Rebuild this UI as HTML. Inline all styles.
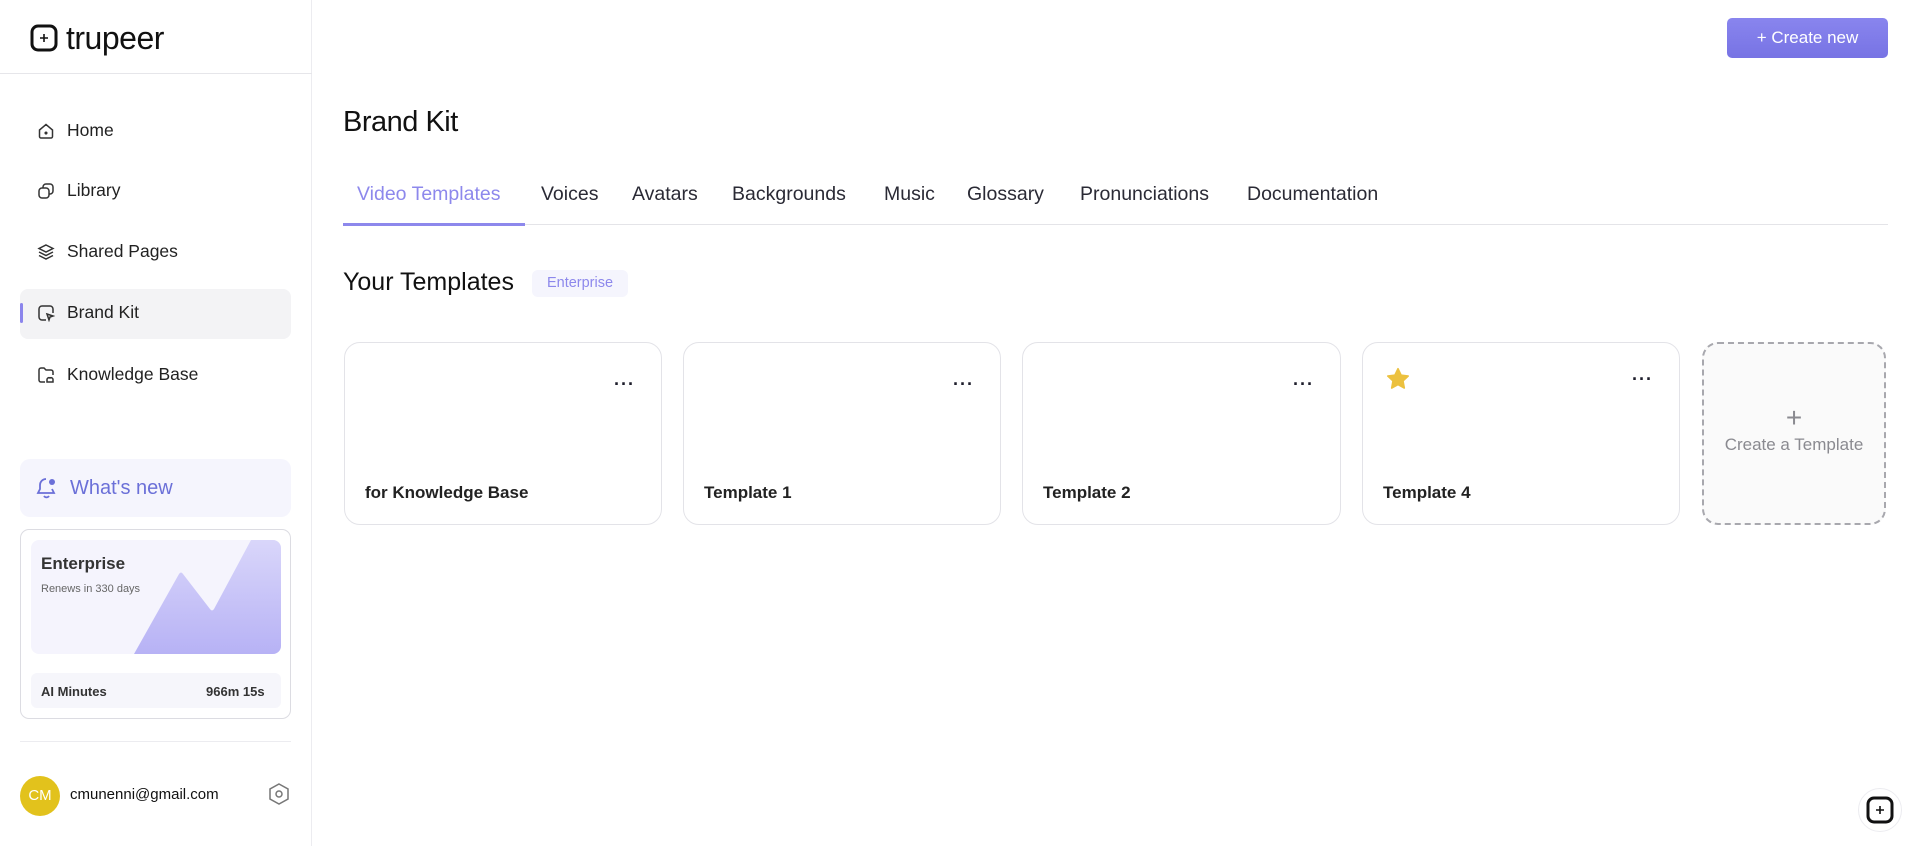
<!DOCTYPE html>
<html><head><meta charset="utf-8"><style>
*{box-sizing:border-box;margin:0;padding:0}
body{width:1920px;height:846px;background:#fff;font-family:"Liberation Sans",sans-serif;color:#1d1d2b;position:relative;overflow:hidden}
.abs{position:absolute}
.side{left:0;top:0;width:312px;height:846px;border-right:1px solid #ececf0}
.nav{left:37px;font-size:17.5px;display:flex;align-items:center;color:#222}
.nav svg{margin-right:12px}
.tab{top:183px;font-size:19.5px;color:#2a2a35}
.card{top:342px;height:183px;border:1px solid #e3e3e8;border-radius:16px;background:#fff}
.card .t{position:absolute;left:20px;top:140px;font-size:17px;font-weight:bold;color:#222}
.card .d{position:absolute;right:26px;top:36px;font-size:18px;font-weight:bold;letter-spacing:1px;line-height:10px}
</style></head><body>
<div class="abs side"></div>
<svg class="abs" style="left:30px;top:24px" width="28" height="28" viewBox="0 0 28 28"><rect x="2" y="2" width="24" height="24" rx="6" fill="none" stroke="#111" stroke-width="3"/><path d="M14 10v8M10 14h8" stroke="#111" stroke-width="1.6"/></svg>
<div class="abs" style="left:66px;top:20px;font-size:32px;color:#111;letter-spacing:-0.5px">trupeer</div>
<div class="abs" style="left:0;top:73px;width:312px;height:1px;background:#e6e6ea"></div>
<div class="abs" style="left:20px;top:289px;width:271px;height:50px;background:#f3f3f5;border-radius:8px"></div>
<div class="abs" style="left:20px;top:303px;width:3px;height:20px;background:#8b85ec;border-radius:2px"></div>
<div class="abs nav" style="top:120px"><svg width="18" height="18" viewBox="0 0 18 18" fill="none" stroke="#333" stroke-width="1.5"><path d="M2.5 8L9 2.5 15.5 8v6.5a1.5 1.5 0 0 1-1.5 1.5H4a1.5 1.5 0 0 1-1.5-1.5z"/><circle cx="9" cy="11" r=".8" fill="#333"/></svg>Home</div>
<div class="abs nav" style="top:180px"><svg width="18" height="18" viewBox="0 0 18 18" fill="none" stroke="#333" stroke-width="1.5"><rect x="2" y="6" width="10" height="10" rx="3"/><path d="M6 6V5a3 3 0 0 1 3-3h4a3 3 0 0 1 3 3v4a3 3 0 0 1-3 3h-1"/></svg>Library</div>
<div class="abs nav" style="top:241px"><svg width="18" height="18" viewBox="0 0 18 18" fill="none" stroke="#333" stroke-width="1.5"><path d="M9 2l7 3.5-7 3.5-7-3.5z M2 9l7 3.5L16 9 M2 12.5L9 16l7-3.5"/></svg>Shared Pages</div>
<div class="abs nav" style="top:302px"><svg width="18" height="18" viewBox="0 0 18 18" fill="none" stroke="#333" stroke-width="1.5"><path d="M9 16H5a3 3 0 0 1-3-3V5a3 3 0 0 1 3-3h8a3 3 0 0 1 3 3v4"/><path d="M10 10l6 2-3 1-1 3z"/></svg>Brand Kit</div>
<div class="abs nav" style="top:364px"><svg width="18" height="18" viewBox="0 0 18 18" fill="none" stroke="#333" stroke-width="1.5"><path d="M8 16H4a2 2 0 0 1-2-2V4a2 2 0 0 1 2-2h3l2 2h5a2 2 0 0 1 2 2v3"/><path d="M10 16h6v-2a2 2 0 0 0-3-2 2 2 0 0 0-3 2z"/></svg>Knowledge Base</div>
<div class="abs" style="left:20px;top:459px;width:271px;height:58px;background:#f5f5fd;border-radius:10px"></div>
<svg class="abs" style="left:36px;top:476px" width="22" height="24" viewBox="0 0 22 24" fill="none" stroke="#6b70d8" stroke-width="1.8"><path d="M10 3a6 6 0 0 0-6 6v4l-2 4h16l-2-4"/><path d="M8 20a3 3 0 0 0 5 0"/><circle cx="16" cy="6" r="3" fill="#6b70d8" stroke="none"/></svg>
<div class="abs" style="left:70px;top:477px;font-size:20px;color:#6b70d8">What's new</div>
<div class="abs" style="left:20px;top:529px;width:271px;height:190px;border:1px solid #dcdce2;border-radius:9px"></div>
<div class="abs" style="left:31px;top:540px;width:250px;height:114px;background:#f5f4fd;border-radius:8px;overflow:hidden">
<svg class="abs" style="left:0;top:0" width="250" height="114" viewBox="0 0 250 114"><defs><linearGradient id="g" x1="0" y1="0" x2="0" y2="1"><stop offset="0" stop-color="#d9d6fa"/><stop offset="1" stop-color="#b7b2f5"/></linearGradient></defs><path d="M103 114L148 34Q150 31 152 34L179 69Q181 72 183 69L220 0H250V114Z" fill="url(#g)"/></svg>
<div class="abs" style="left:10px;top:14px;font-size:17px;font-weight:bold;color:#333">Enterprise</div>
<div class="abs" style="left:10px;top:43px;font-size:11px;color:#666">Renews in 330 days</div>
</div>
<div class="abs" style="left:31px;top:673px;width:250px;height:35px;background:#f6f6fb;border-radius:6px"></div>
<div class="abs" style="left:41px;top:684px;font-size:13px;font-weight:bold;color:#333">AI Minutes</div>
<div class="abs" style="left:206px;top:684px;font-size:13px;font-weight:bold;color:#333">966m 15s</div>
<div class="abs" style="left:20px;top:741px;width:271px;height:1px;background:#ececf0"></div>
<div class="abs" style="left:20px;top:776px;width:40px;height:40px;border-radius:50%;background:#e2c21c;color:#fff;font-size:15px;text-align:center;line-height:40px">CM</div>
<div class="abs" style="left:70px;top:786px;font-size:15px;color:#111">cmunenni@gmail.com</div>
<svg class="abs" style="left:267px;top:782px" width="24" height="24" viewBox="0 0 24 24" fill="none" stroke="#777" stroke-width="1.5"><path d="M12 2l9 5v10l-9 5-9-5V7z"/><circle cx="12" cy="12" r="3"/></svg>
<div class="abs" style="left:1727px;top:18px;width:161px;height:40px;background:linear-gradient(#8985ee,#7773e4);border-radius:5px;color:#fff;font-size:17px;text-align:center;line-height:40px">+ Create new</div>
<div class="abs" style="left:343px;top:106px;font-size:29px;color:#111;letter-spacing:-0.5px">Brand Kit</div>
<div class="abs tab" style="left:357px;color:#8d88ec">Video Templates</div>
<div class="abs tab" style="left:541px">Voices</div>
<div class="abs tab" style="left:632px">Avatars</div>
<div class="abs tab" style="left:732px">Backgrounds</div>
<div class="abs tab" style="left:884px">Music</div>
<div class="abs tab" style="left:967px">Glossary</div>
<div class="abs tab" style="left:1080px">Pronunciations</div>
<div class="abs tab" style="left:1247px">Documentation</div>
<div class="abs" style="left:343px;top:224px;width:1545px;height:1px;background:#e4e4e8"></div>
<div class="abs" style="left:343px;top:223px;width:182px;height:3px;background:#8d88ec"></div>
<div class="abs" style="left:343px;top:268px;font-size:25px;color:#111">Your Templates</div>
<div class="abs" style="left:532px;top:270px;width:96px;height:27px;background:#f5f5fd;border-radius:6px;color:#8d88ec;font-size:14.5px;text-align:center;line-height:27px">Enterprise</div>
<div class="abs card" style="left:344px;width:318px"><div class="d">···</div><div class="t">for Knowledge Base</div></div>
<div class="abs card" style="left:683px;width:318px"><div class="d">···</div><div class="t">Template 1</div></div>
<div class="abs card" style="left:1022px;width:319px"><div class="d">···</div><div class="t">Template 2</div></div>
<div class="abs card" style="left:1362px;width:318px"><div class="d" style="top:31px">···</div>
<svg style="position:absolute;left:22px;top:23px" width="26" height="26" viewBox="0 0 24 24"><path d="M12 2.5l2.9 6 6.5.8-4.8 4.5 1.2 6.5L12 17.1l-5.8 3.2 1.2-6.5L2.6 9.3l6.5-.8z" fill="#ecc13f" stroke="#ecc13f" stroke-linejoin="round" stroke-width="1.5"/></svg>
<div class="t">Template 4</div></div>
<div class="abs" style="left:1702px;top:342px;width:184px;height:183px;border:2px dashed #a8a8ae;border-radius:16px;background:#fafafa;text-align:center;color:#8a8a90">
<div style="font-size:28px;margin-top:59px;font-weight:300;line-height:30px">+</div><div style="font-size:17px;margin-top:2px">Create a Template</div></div>
<div class="abs" style="left:1858px;top:788px;width:44px;height:44px;border-radius:50%;border:1px solid #ececf0"></div>
<svg class="abs" style="left:1865px;top:795px" width="30" height="30" viewBox="0 0 30 30"><rect x="3" y="3" width="24" height="24" rx="6" fill="none" stroke="#111" stroke-width="3"/><path d="M15 11v8M11 15h8" stroke="#111" stroke-width="1.6"/></svg>
</body></html>
